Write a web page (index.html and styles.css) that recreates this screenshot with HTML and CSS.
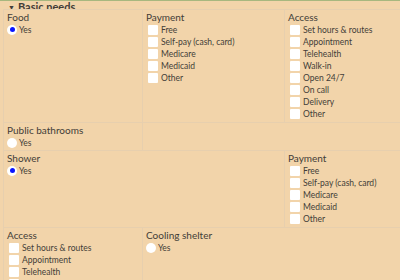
FILE: index.html
```html
<!DOCTYPE html>
<html>
<head>
<meta charset="utf-8">
<link rel="stylesheet" href="styles.css">
</head>
<body>
<div class="page">
  <div class="header"><span class="caret">▼</span> Basic needs</div>
  <div class="grid">
    <div class="cell">
      <div class="label">Food</div>
      <div class="opt radio"><span class="rb on"></span>Yes</div>
    </div>
    <div class="cell">
      <div class="label">Payment</div>
      <div class="opt"><span class="cb"></span>Free</div>
      <div class="opt"><span class="cb"></span>Self-pay (cash, card)</div>
      <div class="opt"><span class="cb"></span>Medicare</div>
      <div class="opt"><span class="cb"></span>Medicaid</div>
      <div class="opt"><span class="cb"></span>Other</div>
    </div>
    <div class="cell">
      <div class="label">Access</div>
      <div class="opt"><span class="cb"></span>Set hours &amp; routes</div>
      <div class="opt"><span class="cb"></span>Appointment</div>
      <div class="opt"><span class="cb"></span>Telehealth</div>
      <div class="opt"><span class="cb"></span>Walk-in</div>
      <div class="opt"><span class="cb"></span>Open 24/7</div>
      <div class="opt"><span class="cb"></span>On call</div>
      <div class="opt"><span class="cb"></span>Delivery</div>
      <div class="opt"><span class="cb"></span>Other</div>
    </div>

    <div class="cell">
      <div class="label">Public bathrooms</div>
      <div class="opt radio"><span class="rb"></span>Yes</div>
    </div>
    <div class="cell span2"></div>

    <div class="cell span2">
      <div class="label">Shower</div>
      <div class="opt radio"><span class="rb on"></span>Yes</div>
    </div>
    <div class="cell">
      <div class="label">Payment</div>
      <div class="opt"><span class="cb"></span>Free</div>
      <div class="opt"><span class="cb"></span>Self-pay (cash, card)</div>
      <div class="opt"><span class="cb"></span>Medicare</div>
      <div class="opt"><span class="cb"></span>Medicaid</div>
      <div class="opt"><span class="cb"></span>Other</div>
    </div>

    <div class="cell">
      <div class="label">Access</div>
      <div class="opt"><span class="cb"></span>Set hours &amp; routes</div>
      <div class="opt"><span class="cb"></span>Appointment</div>
      <div class="opt"><span class="cb"></span>Telehealth</div>
      <div class="opt"><span class="cb"></span>Walk-in</div>
    </div>
    <div class="cell span2">
      <div class="label">Cooling shelter</div>
      <div class="opt radio"><span class="rb"></span>Yes</div>
    </div>
  </div>
</div>
</body>
</html>
```
FILE: styles.css
```css
html, body {
  margin: 0;
  padding: 0;
}
body {
  background: #f2d4aa;
  color: #423d38;
  font-family: Lato, "Open Sans", sans-serif;
  overflow: hidden;
  height: 280px;
}
.page {
  border-top: 1px solid #a7b77f;
}
.header {
  height: 8px;
  line-height: 4px;
  overflow: hidden;
  font-weight: bold;
  font-size: 11px;
  padding-left: 5px;
  border-bottom: 1px solid #e7cfae;
  margin-left: 3px;
  display: flex;
  align-items: flex-end;
  gap: 3px;
}
.header .caret {
  font-size: 7px;
}
.grid {
  display: grid;
  grid-template-columns: 139px 142px 1fr;
  margin-left: 3px;
}
.cell {
  border-left: 1px solid #e7cfae;
  border-bottom: 1px solid #e7cfae;
  padding: 1px 4px 2px 3px;
}
.span2 {
  grid-column: span 2;
}
.label {
  font-size: 10px;
  line-height: 13px;
}
.opt {
  display: flex;
  align-items: center;
  height: 12px;
  font-size: 8.5px;
  padding-left: 2px;
  gap: 3px;
}
.opt.radio {
  height: 11px;
  padding-left: 0;
  gap: 2px;
}
.cb {
  width: 10px;
  height: 10px;
  background: #fff;
  border-radius: 1px;
  flex: none;
}
.rb {
  width: 10px;
  height: 10px;
  border-radius: 50%;
  background: #fff;
  flex: none;
  display: flex;
  align-items: center;
  justify-content: center;
}
.rb.on::after {
  content: "";
  width: 5px;
  height: 5px;
  border-radius: 50%;
  background: #0a14ff;
}
```
